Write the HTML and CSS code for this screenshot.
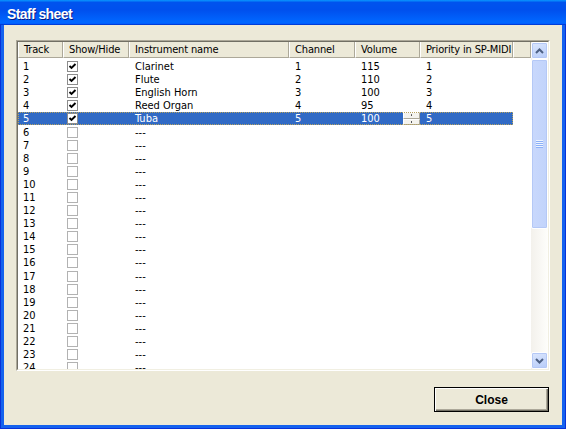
FILE: index.html
```html
<!DOCTYPE html>
<html>
<head>
<meta charset="utf-8">
<title>Staff sheet</title>
<link rel="stylesheet" href="styles.css">
</head>
<body>
<div class="window">
  <div class="titlebar"><span class="title">Staff sheet</span></div>
  <div class="frame">
    <div class="client">
      <div class="list">
        <div class="list-in">
          <div class="list-main">
            <div class="header">
              <div class="hcell c1">Track</div>
              <div class="hcell c2">Show/Hide</div>
              <div class="hcell c3">Instrument name</div>
              <div class="hcell c4">Channel</div>
              <div class="hcell c5">Volume</div>
              <div class="hcell c6">Priority in SP-MIDI</div>
              <div class="hcell cfill"></div>
            </div>
            <div class="rows">
              <div class="row"><div class="cell c1">1</div><div class="cell c2"><span class="cb on"><svg width="9" height="9" viewBox="0 0 9 9"><path d="M1.5 4l2 2 4-4" fill="none" stroke="#000" stroke-width="1.9"/></svg></span></div><div class="cell c3">Clarinet</div><div class="cell c4">1</div><div class="cell c5">115</div><div class="cell c6">1</div></div>
              <div class="row"><div class="cell c1">2</div><div class="cell c2"><span class="cb on"><svg width="9" height="9" viewBox="0 0 9 9"><path d="M1.5 4l2 2 4-4" fill="none" stroke="#000" stroke-width="1.9"/></svg></span></div><div class="cell c3">Flute</div><div class="cell c4">2</div><div class="cell c5">110</div><div class="cell c6">2</div></div>
              <div class="row"><div class="cell c1">3</div><div class="cell c2"><span class="cb on"><svg width="9" height="9" viewBox="0 0 9 9"><path d="M1.5 4l2 2 4-4" fill="none" stroke="#000" stroke-width="1.9"/></svg></span></div><div class="cell c3">English Horn</div><div class="cell c4">3</div><div class="cell c5">100</div><div class="cell c6">3</div></div>
              <div class="row"><div class="cell c1">4</div><div class="cell c2"><span class="cb on"><svg width="9" height="9" viewBox="0 0 9 9"><path d="M1.5 4l2 2 4-4" fill="none" stroke="#000" stroke-width="1.9"/></svg></span></div><div class="cell c3">Reed Organ</div><div class="cell c4">4</div><div class="cell c5">95</div><div class="cell c6">4</div></div>
              <div class="row sel"><div class="cell c1">5</div><div class="cell c2"><span class="cb on"><svg width="9" height="9" viewBox="0 0 9 9"><path d="M1.5 4l2 2 4-4" fill="none" stroke="#000" stroke-width="1.9"/></svg></span></div><div class="cell c3">Tuba</div><div class="cell c4">5</div><div class="cell c5 edit"><span>100</span><span class="spin"><span class="sp"></span><span class="sp"></span></span></div><div class="cell c6">5</div></div>
              <div class="row"><div class="cell c1">6</div><div class="cell c2"><span class="cb"></span></div><div class="cell c3">---</div><div class="cell c4"></div><div class="cell c5"></div><div class="cell c6"></div></div>
              <div class="row"><div class="cell c1">7</div><div class="cell c2"><span class="cb"></span></div><div class="cell c3">---</div><div class="cell c4"></div><div class="cell c5"></div><div class="cell c6"></div></div>
              <div class="row"><div class="cell c1">8</div><div class="cell c2"><span class="cb"></span></div><div class="cell c3">---</div><div class="cell c4"></div><div class="cell c5"></div><div class="cell c6"></div></div>
              <div class="row"><div class="cell c1">9</div><div class="cell c2"><span class="cb"></span></div><div class="cell c3">---</div><div class="cell c4"></div><div class="cell c5"></div><div class="cell c6"></div></div>
              <div class="row"><div class="cell c1">10</div><div class="cell c2"><span class="cb"></span></div><div class="cell c3">---</div><div class="cell c4"></div><div class="cell c5"></div><div class="cell c6"></div></div>
              <div class="row"><div class="cell c1">11</div><div class="cell c2"><span class="cb"></span></div><div class="cell c3">---</div><div class="cell c4"></div><div class="cell c5"></div><div class="cell c6"></div></div>
              <div class="row"><div class="cell c1">12</div><div class="cell c2"><span class="cb"></span></div><div class="cell c3">---</div><div class="cell c4"></div><div class="cell c5"></div><div class="cell c6"></div></div>
              <div class="row"><div class="cell c1">13</div><div class="cell c2"><span class="cb"></span></div><div class="cell c3">---</div><div class="cell c4"></div><div class="cell c5"></div><div class="cell c6"></div></div>
              <div class="row"><div class="cell c1">14</div><div class="cell c2"><span class="cb"></span></div><div class="cell c3">---</div><div class="cell c4"></div><div class="cell c5"></div><div class="cell c6"></div></div>
              <div class="row"><div class="cell c1">15</div><div class="cell c2"><span class="cb"></span></div><div class="cell c3">---</div><div class="cell c4"></div><div class="cell c5"></div><div class="cell c6"></div></div>
              <div class="row"><div class="cell c1">16</div><div class="cell c2"><span class="cb"></span></div><div class="cell c3">---</div><div class="cell c4"></div><div class="cell c5"></div><div class="cell c6"></div></div>
              <div class="row"><div class="cell c1">17</div><div class="cell c2"><span class="cb"></span></div><div class="cell c3">---</div><div class="cell c4"></div><div class="cell c5"></div><div class="cell c6"></div></div>
              <div class="row"><div class="cell c1">18</div><div class="cell c2"><span class="cb"></span></div><div class="cell c3">---</div><div class="cell c4"></div><div class="cell c5"></div><div class="cell c6"></div></div>
              <div class="row"><div class="cell c1">19</div><div class="cell c2"><span class="cb"></span></div><div class="cell c3">---</div><div class="cell c4"></div><div class="cell c5"></div><div class="cell c6"></div></div>
              <div class="row"><div class="cell c1">20</div><div class="cell c2"><span class="cb"></span></div><div class="cell c3">---</div><div class="cell c4"></div><div class="cell c5"></div><div class="cell c6"></div></div>
              <div class="row"><div class="cell c1">21</div><div class="cell c2"><span class="cb"></span></div><div class="cell c3">---</div><div class="cell c4"></div><div class="cell c5"></div><div class="cell c6"></div></div>
              <div class="row"><div class="cell c1">22</div><div class="cell c2"><span class="cb"></span></div><div class="cell c3">---</div><div class="cell c4"></div><div class="cell c5"></div><div class="cell c6"></div></div>
              <div class="row"><div class="cell c1">23</div><div class="cell c2"><span class="cb"></span></div><div class="cell c3">---</div><div class="cell c4"></div><div class="cell c5"></div><div class="cell c6"></div></div>
              <div class="row"><div class="cell c1">24</div><div class="cell c2"><span class="cb"></span></div><div class="cell c3">---</div><div class="cell c4"></div><div class="cell c5"></div><div class="cell c6"></div></div>
            </div>
          </div>
          <div class="vscroll">
            <div class="sbtn"><svg width="9" height="6" viewBox="0 0 9 6"><path d="M1 5l3.5-3.5L8 5" fill="none" stroke="#4d6185" stroke-width="2"/></svg></div>
            <div class="thumb"><span class="grip"></span></div>
            <div class="strack"></div>
            <div class="sbtn"><svg width="9" height="6" viewBox="0 0 9 6"><path d="M1 1l3.5 3.5L8 1" fill="none" stroke="#4d6185" stroke-width="2"/></svg></div>
          </div>
        </div>
      </div>
      <div class="actions"><button class="btn">Close</button></div>
    </div>
  </div>
</div>
</body>
</html>
```

FILE: styles.css
```css
* { box-sizing: border-box; }
html, body { margin: 0; padding: 0; }
body {
  width: 566px;
  height: 429px;
  overflow: hidden;
  background: #fff;
  font-family: "DejaVu Sans Condensed", "Liberation Sans", Arial, sans-serif;
  font-size: 11px;
  color: #000;
}
.window {
  width: 566px;
  height: 429px;
  display: flex;
  flex-direction: column;
  background: #0831d9;
  padding: 0 1px 1px 1px;
}
.titlebar {
  height: 25px;
  flex: none;
  display: flex;
  align-items: center;
  padding-left: 7px;
  margin: 0 -1px;
  background: linear-gradient(180deg, #0997ff 0, #0053ee 10%, #0050ee 40%, #0066ff 86%, #0066ff 92%, #005bff 95%, #003dd7 97%, #003dd7 100%);
}
.title {
  color: #fff;
  font-family: "Liberation Sans", Arial, sans-serif;
  font-weight: bold;
  font-size: 14px;
  letter-spacing: -0.6px;
  text-shadow: 1px 1px 0 #0a1883;
  padding-top: 3px;
}
.frame {
  flex: 1;
  display: flex;
  background: #1462ee;
  padding: 0 3px 3px 3px;
}
.client {
  flex: 1;
  display: flex;
  flex-direction: column;
  background: #ece9d8;
  padding: 15px 12px 0 12px;
}
.list {
  height: 331px;
  flex: none;
  border: 1px solid;
  border-color: #aca899 #fff #fff #aca899;
}
.list-in {
  height: 100%;
  display: flex;
  border: 1px solid;
  border-color: #716f64 #f1efe2 #f1efe2 #716f64;
  background: #fff;
}
.list-main {
  flex: 1;
  overflow: hidden;
  display: flex;
  flex-direction: column;
}
.header {
  height: 16px;
  flex: none;
  display: flex;
  background: #ece9d8;
}
.hcell {
  height: 16px;
  line-height: 15px;
  padding-left: 5px;
  letter-spacing: -0.15px;
  border-left: 1px solid #fff;
  border-right: 1px solid #aca899;
  border-bottom: 1px solid #aca899;
  white-space: nowrap;
  overflow: hidden;
}
.c1 { width: 45px; }
.c2 { width: 66px; }
.c3 { width: 160px; }
.c4 { width: 66px; }
.c5 { width: 65px; }
.c6 { width: 93px; }
.cfill { flex: 1; }
.rows {
  padding-top: 2px;
}
.row {
  width: 495px;
  height: 13.1px;
  display: flex;
  align-items: center;
}
.cell {
  height: 13px;
  line-height: 13px;
  padding-left: 6px;
  white-space: nowrap;
}
.row .c1 { padding-left: 5px; }
.row .c2 { padding-left: 4px; display: flex; align-items: center; }
.cb {
  width: 11px;
  height: 11px;
  border: 1px solid #b2b2b2;
  background: #fff;
  display: flex;
  align-items: center;
  justify-content: center;
}
.cb.on { border-color: #8c8c8c; }
.row.sel {
  background: #316ac5;
  color: #fff;
  outline: 1px dotted #b7a25f;
  outline-offset: -1px;
}
.cell.edit {
  display: flex;
  justify-content: space-between;
  align-items: center;
}
.spin {
  width: 17px;
  height: 13px;
  display: flex;
  flex-direction: column;
  background: #ece9d8;
}
.sp {
  flex: 1;
  border: 1px solid;
  border-color: #fff #aca899 #aca899 #fff;
  background: radial-gradient(circle, #555 0.7px, transparent 1px) center / 100% 100% no-repeat, #f4f3ee;
}
.vscroll {
  width: 17px;
  flex: none;
  display: flex;
  flex-direction: column;
  background: linear-gradient(90deg, #f3f1ec, #fefefb);
}
.sbtn {
  height: 17px;
  flex: none;
  display: flex;
  align-items: center;
  justify-content: center;
  border: 1px solid #fff;
  border-radius: 2px;
  background: linear-gradient(160deg, #dce7fe, #b6cbf8);
  box-shadow: inset 0 0 0 1px #b4c8f6;
}
.thumb {
  height: 170px;
  flex: none;
  display: flex;
  align-items: center;
  justify-content: center;
  border: 1px solid #fff;
  border-radius: 2px;
  background: linear-gradient(90deg, #c9d8fc, #c1d3fb);
  box-shadow: inset 0 0 0 1px #b4c8f6;
}
.grip {
  width: 7px;
  height: 8px;
  background: repeating-linear-gradient(180deg, #eef4fe 0 1px, #8cb0f8 1px 2px);
}
.strack { flex: 1; }
.actions {
  display: flex;
  justify-content: flex-end;
  padding-top: 16px;
  padding-right: 1px;
}
.btn {
  width: 115px;
  height: 25px;
  padding: 0;
  font-family: "Liberation Sans", Arial, sans-serif;
  font-weight: bold;
  font-size: 12px;
  color: #000;
  background: #ece9d8;
  border: 1px solid #000;
  box-shadow: inset 1px 1px 0 #fff, inset -1px -1px 0 #716f64, inset -2px -2px 0 #aca899;
}
```
